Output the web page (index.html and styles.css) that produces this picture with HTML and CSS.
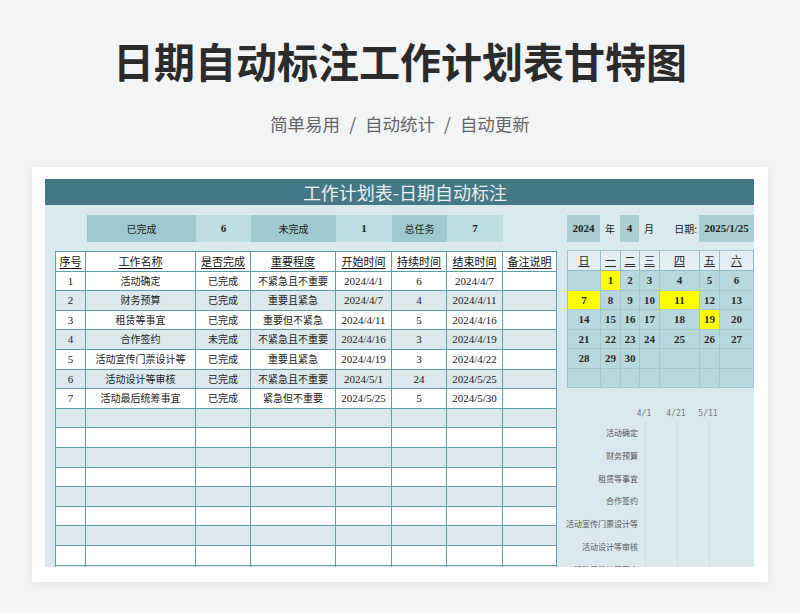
FILE: index.html
```html
<!DOCTYPE html>
<html lang="zh-CN">
<head>
<meta charset="utf-8">
<title>日期自动标注工作计划表甘特图</title>
<link rel="stylesheet" href="styles.css">
</head>
<body>
<div class="page">
  <header class="hero">
    <h1>日期自动标注工作计划表甘特图</h1>
    <p>简单易用<span class="sep">/</span>自动统计<span class="sep">/</span>自动更新</p>
  </header>
  <section class="card">
    <div class="sheet">
      <div class="sheet-title">工作计划表-日期自动标注</div>
      <div class="sheet-body">
        <div class="left">
          <div class="summary">
            <div class="s-lab w109">已完成</div>
            <div class="s-val w55">6</div>
            <div class="s-lab w85">未完成</div>
            <div class="s-val w56">1</div>
            <div class="s-lab w55">总任务</div>
            <div class="s-val w56">7</div>
          </div>
          <div class="tbl">
            <div class="tr th"><div>序号</div><div>工作名称</div><div>是否完成</div><div>重要程度</div><div>开始时间</div><div>持续时间</div><div>结束时间</div><div>备注说明</div></div>
            <div class="tr"><div class="n">1</div><div>活动确定</div><div>已完成</div><div>不紧急且不重要</div><div class="n">2024/4/1</div><div class="n">6</div><div class="n">2024/4/7</div><div></div></div>
            <div class="tr alt"><div class="n">2</div><div>财务预算</div><div>已完成</div><div>重要且紧急</div><div class="n">2024/4/7</div><div class="n">4</div><div class="n">2024/4/11</div><div></div></div>
            <div class="tr"><div class="n">3</div><div>租赁等事宜</div><div>已完成</div><div>重要但不紧急</div><div class="n">2024/4/11</div><div class="n">5</div><div class="n">2024/4/16</div><div></div></div>
            <div class="tr alt"><div class="n">4</div><div>合作签约</div><div>未完成</div><div>不紧急且不重要</div><div class="n">2024/4/16</div><div class="n">3</div><div class="n">2024/4/19</div><div></div></div>
            <div class="tr"><div class="n">5</div><div>活动宣传门票设计等</div><div>已完成</div><div>重要且紧急</div><div class="n">2024/4/19</div><div class="n">3</div><div class="n">2024/4/22</div><div></div></div>
            <div class="tr alt"><div class="n">6</div><div>活动设计等审核</div><div>已完成</div><div>不紧急且不重要</div><div class="n">2024/5/1</div><div class="n">24</div><div class="n">2024/5/25</div><div></div></div>
            <div class="tr"><div class="n">7</div><div>活动最后统筹事宜</div><div>已完成</div><div>紧急但不重要</div><div class="n">2024/5/25</div><div class="n">5</div><div class="n">2024/5/30</div><div></div></div>
            <div class="tr alt"><div></div><div></div><div></div><div></div><div></div><div></div><div></div><div></div></div>
            <div class="tr"><div></div><div></div><div></div><div></div><div></div><div></div><div></div><div></div></div>
            <div class="tr alt"><div></div><div></div><div></div><div></div><div></div><div></div><div></div><div></div></div>
            <div class="tr"><div></div><div></div><div></div><div></div><div></div><div></div><div></div><div></div></div>
            <div class="tr alt"><div></div><div></div><div></div><div></div><div></div><div></div><div></div><div></div></div>
            <div class="tr"><div></div><div></div><div></div><div></div><div></div><div></div><div></div><div></div></div>
            <div class="tr alt"><div></div><div></div><div></div><div></div><div></div><div></div><div></div><div></div></div>
            <div class="tr"><div></div><div></div><div></div><div></div><div></div><div></div><div></div><div></div></div>
            <div class="tr alt"><div></div><div></div><div></div><div></div><div></div><div></div><div></div><div></div></div>
            <div class="tr"><div></div><div></div><div></div><div></div><div></div><div></div><div></div><div></div></div>
          </div>
        </div>
        <div class="right">
          <div class="datebar">
            <div class="d-val w33 n">2024</div>
            <div class="d-txt w20">年</div>
            <div class="d-val w19 n">4</div>
            <div class="d-txt w20">月</div>
            <div class="d-txt w40 r">日期:</div>
            <div class="d-val w55 n">2025/1/25</div>
          </div>
          <div class="cal">
            <div class="ch">日</div><div class="ch">一</div><div class="ch">二</div><div class="ch">三</div><div class="ch">四</div><div class="ch">五</div><div class="ch">六</div>
            <div></div><div class="hl">1</div><div>2</div><div>3</div><div>4</div><div>5</div><div>6</div>
            <div class="hl">7</div><div>8</div><div>9</div><div>10</div><div class="hl">11</div><div>12</div><div>13</div>
            <div>14</div><div>15</div><div>16</div><div>17</div><div>18</div><div class="hl">19</div><div>20</div>
            <div>21</div><div>22</div><div>23</div><div>24</div><div>25</div><div>26</div><div>27</div>
            <div>28</div><div>29</div><div>30</div><div></div><div></div><div></div><div></div>
            <div></div><div></div><div></div><div></div><div></div><div></div><div></div>
          </div>
          <div class="gantt">
            <div class="axis"><span>4/1</span><span>4/21</span><span>5/11</span></div>
            <div class="g-row"><div class="g-lab">活动确定</div><div class="g-plot"><i></i><i></i><i></i></div></div>
            <div class="g-row"><div class="g-lab">财务预算</div><div class="g-plot"><i></i><i></i><i></i></div></div>
            <div class="g-row"><div class="g-lab">租赁等事宜</div><div class="g-plot"><i></i><i></i><i></i></div></div>
            <div class="g-row"><div class="g-lab">合作签约</div><div class="g-plot"><i></i><i></i><i></i></div></div>
            <div class="g-row"><div class="g-lab">活动宣传门票设计等</div><div class="g-plot"><i></i><i></i><i></i></div></div>
            <div class="g-row"><div class="g-lab">活动设计等审核</div><div class="g-plot"><i></i><i></i><i></i></div></div>
            <div class="g-row"><div class="g-lab">活动最后统筹事宜</div><div class="g-plot"><i></i><i></i><i></i></div></div>
          </div>
        </div>
      </div>
    </div>
  </section>
</div>
</body>
</html>
```
FILE: styles.css
```css
html, body {
  margin: 0;
  padding: 0;
}
body {
  background: #f3f4f6;
  font-family: "Noto Sans CJK SC", "Noto Sans", sans-serif;
  color: #222;
}
.page {
  width: 800px;
  height: 613px;
  overflow: hidden;
}
.hero {
  text-align: center;
  padding-top: 35px;
}
.hero h1 {
  margin: 0;
  font-size: 41px;
  line-height: 50px;
  font-weight: 700;
  color: #2b2b2b;
}
.hero p {
  margin: 27px 0 0;
  font-size: 17.5px;
  line-height: 24px;
  color: #666;
}
.sep {
  margin: 0 9px;
}
.card {
  margin: 31px 32px 0;
  height: 415px;
  box-sizing: border-box;
  background: #fff;
  box-shadow: 0 2px 10px rgba(0, 0, 0, 0.08);
  padding: 12px 14px 0 13px;
}
.sheet {
  width: 709px;
  height: 388px;
  background: #d9e9ed;
  overflow: hidden;
}
.sheet-title {
  height: 26px;
  line-height: 26px;
  background: #447885;
  color: #e8f1f3;
  font-size: 18px;
  text-align: center;
  padding-left: 11px;
}
.sheet-body {
  display: flex;
  gap: 10px;
  padding: 10px 0 0 10px;
}
.left {
  width: 502px;
}
.n {
  font-family: "Liberation Serif", "Noto Sans CJK SC", serif;
}
.summary {
  display: flex;
  height: 27px;
  margin-left: 32px;
  font-size: 10px;
}
.summary > div {
  line-height: 27px;
  text-align: center;
}
.s-lab {
  background: #9fc9d1;
}
.s-val {
  background: #bddde3;
  font-family: "Liberation Serif", serif;
  font-size: 11px;
  font-weight: 700;
}
.w109 { width: 109px; }
.w85 { width: 85px; }
.w56 { width: 56px; }
.w55 { width: 55px; }
.w40 { width: 40px; }
.w33 { width: 33px; }
.w20 { width: 20px; }
.w19 { width: 19px; }

.tbl {
  margin-top: 9px;
  border-left: 1px solid #5f9fac;
  border-top: 1px solid #5f9fac;
}
.tr {
  display: grid;
  grid-template-columns: 30px 110px 55px 85px 56px 55px 56px 54px;
  height: 19.6px;
  background: #fff;
}
.tr.alt {
  background: #dbe9ed;
}
.tr > div {
  box-sizing: border-box;
  border-right: 1px solid #5f9fac;
  border-bottom: 1px solid #5f9fac;
  font-size: 10px;
  line-height: 18.6px;
  text-align: center;
  white-space: nowrap;
  overflow: hidden;
}
.tr > div.n {
  font-size: 11px;
}
.tr.th > div {
  font-size: 11px;
  text-decoration: underline;
  text-underline-offset: 2px;
  color: #111;
}

.right {
  width: 187px;
}
.datebar {
  display: flex;
  height: 27px;
  font-size: 10px;
}
.datebar > div {
  line-height: 27px;
  text-align: center;
}
.d-val {
  background: #a9ced6;
  font-size: 11px;
  font-weight: 700;
}
.d-txt.r {
  text-align: right;
  padding-right: 2px;
  box-sizing: border-box;
}
.cal {
  margin-top: 8px;
  display: grid;
  grid-template-columns: 33px 20px 19px 20px 40px 20px 34px;
  grid-template-rows: 20px repeat(6, 19.5px);
  border-left: 1px solid #9ec5cd;
  border-top: 1px solid #9ec5cd;
  background: #b9d8de;
  font-family: "Liberation Serif", "Noto Sans CJK SC", serif;
  font-size: 11px;
  font-weight: 700;
  color: #2a2a2a;
}
.cal > div {
  box-sizing: border-box;
  border-right: 1px solid #a4c9d1;
  border-bottom: 1px solid #a4c9d1;
  text-align: center;
  line-height: 18.5px;
}
.cal > div.ch {
  background: #e3eff2;
  font-family: "Noto Sans CJK SC", sans-serif;
  font-weight: 400;
  text-decoration: underline;
  text-underline-offset: 1px;
  line-height: 19px;
  border-right-color: #8fbcc6;
  border-bottom-color: #8fbcc6;
}
.cal > div.hl {
  background: #ffff00;
}
.gantt {
  margin-left: -1px;
}
.axis {
  display: flex;
  padding: 18px 0 0 62px;
  height: 16px;
  font-family: "DejaVu Sans Mono", monospace;
  font-size: 8px;
  line-height: 16px;
  color: #777;
}
.axis span {
  width: 32px;
  text-align: center;
}
.g-row {
  display: flex;
  height: 22.8px;
}
.g-lab {
  width: 72px;
  text-align: right;
  font-size: 8px;
  line-height: 22.8px;
  color: #555;
  white-space: nowrap;
}
.g-plot {
  display: flex;
  margin-left: 7px;
}
.g-plot i {
  width: 32px;
  border-left: 1px solid #cde0e5;
  box-sizing: border-box;
}
```
